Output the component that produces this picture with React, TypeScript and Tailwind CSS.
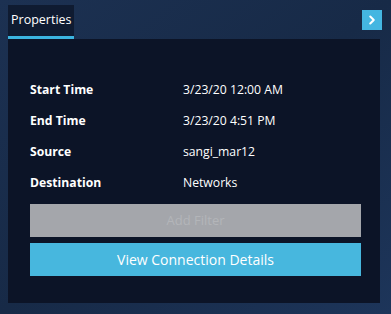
import { ChevronRight } from 'lucide-react'

const rows = [
  { label: 'Start Time', value: '3/23/20 12:00 AM' },
  { label: 'End Time', value: '3/23/20 4:51 PM' },
  { label: 'Source', value: 'sangi_mar12' },
  { label: 'Destination', value: 'Networks' },
]

export default function App() {
  return (
    <div
      className="w-[391px] h-[314px] bg-gradient-to-br from-[#1c3152] via-[#172a47] to-[#1d355a] flex flex-col px-2 pt-[5px] pb-[11px]"
      style={{ fontFamily: '"Open Sans", "Noto Sans", sans-serif' }}
    >
      <div className="flex items-start justify-between h-[34px]">
        <div className="h-[34px] w-[66px] bg-[#0f1b31] flex flex-col">
          <div className="flex-1 flex items-center pl-[3px] text-[12.5px] text-white">Properties</div>
          <div className="h-[3px] bg-[#3bb4df]" />
        </div>
        <button className="mt-[5px] mr-[1px] w-[20px] h-[20px] bg-[#44b6e1] flex items-center justify-center text-white">
          <ChevronRight size={14} strokeWidth={3.5} />
        </button>
      </div>
      <div className="flex-1 w-[372px] bg-[#0c1427] px-[22px] pt-[42px] flex flex-col">
        <div className="flex flex-col gap-[13px]">
          {rows.map((r) => (
            <div key={r.label} className="flex items-center h-[18px]">
              <div className="w-[153px] text-[12.2px] font-bold text-white">{r.label}</div>
              <div className="text-[12.2px] text-white">{r.value}</div>
            </div>
          ))}
        </div>
        <button className="mt-[12px] h-[33px] w-[331px] bg-[#a4a6ab] text-[13px] text-[#b3b5b9]">
          Add Filter
        </button>
        <button className="mt-[6px] h-[33px] w-[331px] bg-[#47b7de] text-[14px] text-white">
          View Connection Details
        </button>
      </div>
    </div>
  )
}
